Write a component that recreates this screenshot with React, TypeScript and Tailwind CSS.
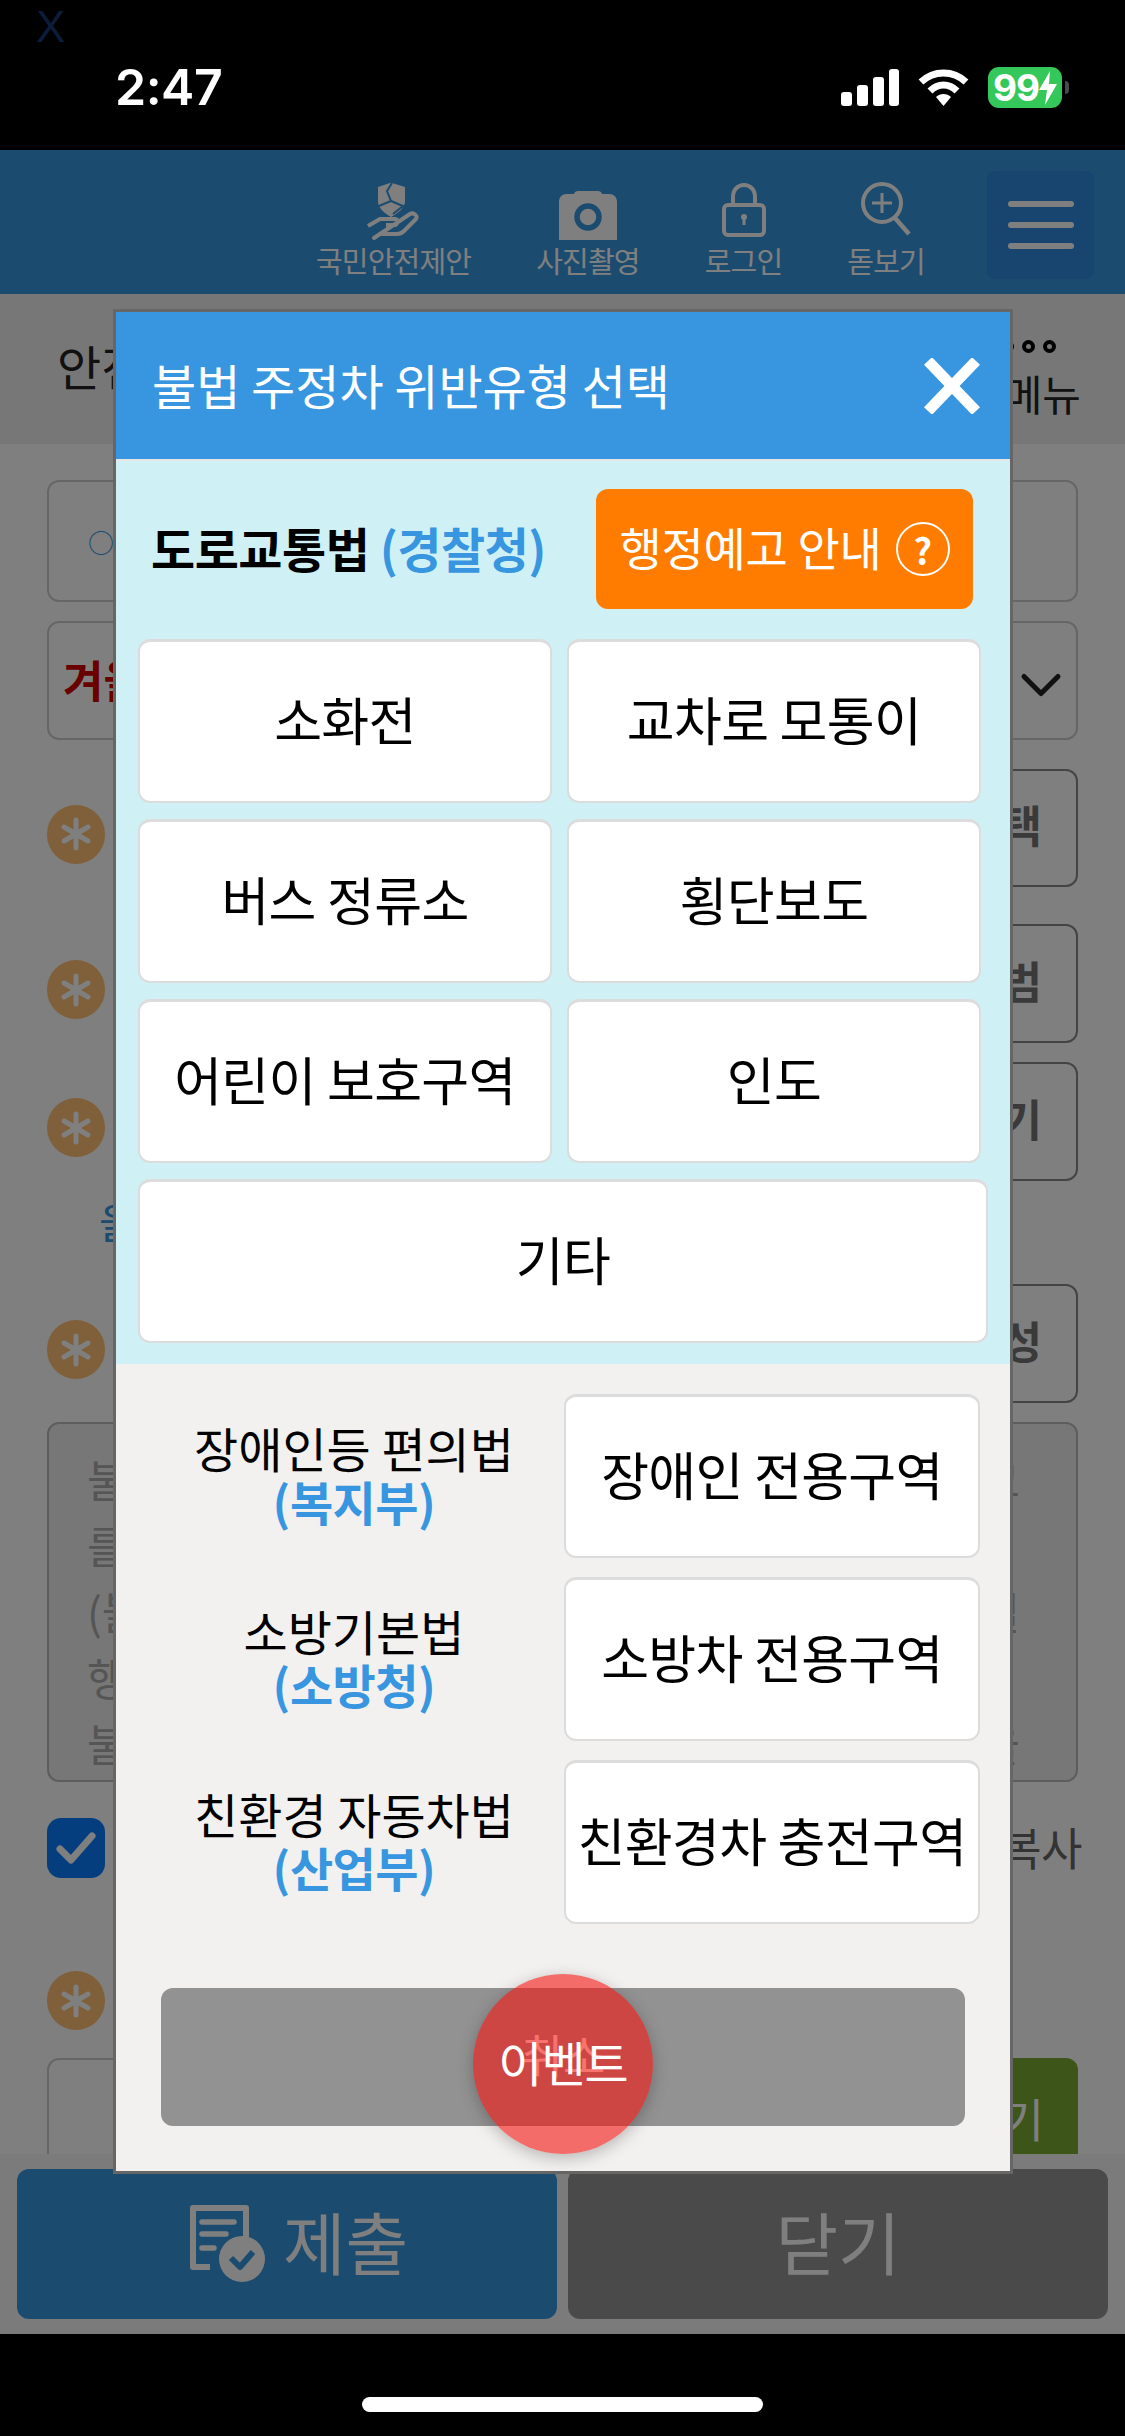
import type { ReactNode } from "react";
import { ChevronDown } from "lucide-react";

const MODAL_ROWS = ["소화전", "교차로 모통이", "버스 정류소", "횡단보도", "어린이 보호구역", "인도"];

const LAW_ROWS = [
  { law: "장애인등 편의법", agency: "(복지부)", zone: "장애인 전용구역" },
  { law: "소방기본법", agency: "(소방청)", zone: "소방차 전용구역" },
  { law: "친환경 자동차법", agency: "(산업부)", zone: "친환경차 충전구역" },
];

const TEXT_LINES = [
  ["불법 주정차", "고"],
  ["를", ""],
  ["(불법", "별"],
  ["행", ""],
  ["불", "을"],
];

const StatusIcons = () => (
  <div className="flex items-center">
    <svg width="58" height="38" viewBox="0 0 58 38" fill="white">
      <rect x="0" y="23" width="11" height="14" rx="3" />
      <rect x="16" y="16" width="11" height="21" rx="3" />
      <rect x="32" y="8" width="11" height="29" rx="3" />
      <rect x="48" y="0" width="10" height="37" rx="3" />
    </svg>
    <svg className="ml-[19px]" width="51" height="38" viewBox="0 0 51 38" fill="none">
      <path d="M3 13 C16 1 35 1 48 13" stroke="white" strokeWidth="7" strokeLinecap="butt" />
      <path d="M12 22 C20 14 31 14 39 22" stroke="white" strokeWidth="7" />
      <path d="M18 28 C22 24 29 24 33 28 L25.500 37 Z" fill="white" />
    </svg>
    <div className="ml-[19px] flex h-[41px] w-[74px] items-center justify-center rounded-[11px] bg-[#34c759] font-['Inter',sans-serif] text-[37px] font-bold leading-none tracking-[-1px] text-white">
      <span>99</span>
      <svg width="18" height="34" viewBox="0 0 18 34" fill="white">
        <path d="M11 0 L0 19 H8 L6 34 L18 13 H10 Z" />
      </svg>
    </div>
    <div className="ml-[3px] h-[13px] w-[4px] rounded-r-full bg-[#4a4a4a]" />
  </div>
);

const ShieldHandIcon = () => (
  <svg className="-translate-x-[2px]" width="54" height="60" viewBox="0 0 54 60" fill="none">
    <path d="M13 6 L25 2 L27 2 L40 6 V20 C40 27 33 32 26 36 C19 32 13 27 13 20 Z" fill="white" />
    <path d="M27 2 L22 10 L26 20 L14 25 M26 20 L38 25 L28 33" stroke="#3896e0" strokeWidth="2" />
    <path
      d="M3 45 L15 38 H30 C33 38 33 43 30 44 H21 M30 43 L45 33 C49 31 53 35 51 38 L39 50 C37 52 35 53 32 53 H15 L9 57 Z"
      stroke="white"
      strokeWidth="4"
      strokeLinejoin="round"
    />
  </svg>
);

const CameraIcon = () => (
  <svg width="58" height="60" viewBox="0 0 58 60" fill="none">
    <path
      d="M0 21 C0 16 3 13 8 13 H15 C16 10 18 10 20 10 H38 C40 10 42 10 43 13 H50 C55 13 58 16 58 21 V59 H0 Z"
      fill="white"
    />
    <circle cx="29" cy="36" r="11" stroke="#3896e0" strokeWidth="5.500" />
  </svg>
);

const LockIcon = () => (
  <svg width="44" height="60" viewBox="0 0 44 60" fill="none">
    <path d="M11 26 V16 C11 0 33 0 33 16 V26" stroke="white" strokeWidth="4" />
    <rect x="2" y="24" width="40" height="30" rx="4" stroke="white" strokeWidth="4" />
    <circle cx="22" cy="36" r="3" fill="white" />
    <rect x="20.500" y="37" width="3" height="7" fill="white" />
  </svg>
);

const MagnifierIcon = () => (
  <svg width="52" height="60" viewBox="0 0 52 60" fill="none">
    <circle cx="22" cy="22" r="19" stroke="white" strokeWidth="4" />
    <path d="M22 12 V32 M12 22 H32" stroke="white" strokeWidth="3" />
    <path d="M35 37 L49 53" stroke="white" strokeWidth="4.500" />
  </svg>
);

const SubmitIcon = () => (
  <svg width="76" height="78" viewBox="0 0 76 78" fill="none">
    <path d="M20 62 H3 V3 H56 V32" stroke="white" strokeWidth="6" strokeLinejoin="round" />
    <path d="M12 17 H44 M12 29 H36 M12 43 H24" stroke="white" strokeWidth="5.500" strokeLinecap="round" />
    <circle cx="52" cy="54" r="23" fill="white" />
    <path d="M41 53 L50 62 L63 47" stroke="#3896e0" strokeWidth="6" strokeLinejoin="round" />
  </svg>
);

const HeaderLink = ({ label, children }: { label: string; children: ReactNode }) => (
  <div className="flex flex-col items-center">
    <div className="flex h-[60px] items-start justify-center">{children}</div>
    <span className="mt-[2px] text-[29px] leading-[34px] tracking-[-0.8px] text-white">{label}</span>
  </div>
);

const RequiredMark = ({ className = "" }: { className?: string }) => (
  <div className={`flex h-[59px] w-[58px] shrink-0 items-center justify-center rounded-full bg-[#ffc074] ${className}`}>
    <svg width="32" height="34" viewBox="0 0 32 34" stroke="white" strokeWidth="5" strokeLinecap="round">
      <path d="M16 3 V31 M4 10 L28 24 M28 10 L4 24" />
    </svg>
  </div>
);

const FormRow = ({ label, height }: { label: string; height: string }) => (
  <div className={`flex items-center justify-between ${height}`}>
    <RequiredMark className="mt-[12px]" />
    <div className="flex h-full w-[400px] items-center justify-end rounded-[12px] border-2 border-[#888] pb-[8px] pr-[34px] text-[44px] font-bold text-[#747474]">
      {label}
    </div>
  </div>
);

const ChoiceButton = ({ label, className = "w-full" }: { label: string; className?: string }) => (
  <button
    type="button"
    className={`flex h-[164px] items-center justify-center rounded-[12px] border-2 border-t-[3px] border-[#dcdcdc] bg-white pb-[6px] text-[52px] tracking-[-0.6px] text-black ${className}`}
  >
    {label}
  </button>
);

export default function App() {
  return (
    <div className="flex h-[2436px] w-[1125px] flex-col overflow-hidden bg-black font-['Noto_Sans_CJK_KR',sans-serif]">
      {/* status bar */}
      <div className="relative flex h-[150px] shrink-0 items-start justify-between pl-[115px] pr-[56px] pt-[67px]">
        <span className="absolute left-[36px] top-[2px] font-['Liberation_Sans',sans-serif] text-[44px] leading-[50px] text-[#0b1d3a]">
          X
        </span>
        <span className="font-['Inter',sans-serif] text-[50px] font-semibold leading-[40px] tracking-[-0.5px] text-white">
          2:47
        </span>
        <StatusIcons />
      </div>

      <div className="relative flex h-[2184px] shrink-0 flex-col overflow-hidden bg-white">
        {/* page behind the dialog */}
        <header className="flex h-[144px] shrink-0 items-start justify-end gap-[65px] bg-[#3896e0] pr-[31px] pt-[31px]">
          <HeaderLink label="국민안전제안">
            <ShieldHandIcon />
          </HeaderLink>
          <HeaderLink label="사진촬영">
            <CameraIcon />
          </HeaderLink>
          <HeaderLink label="로그인">
            <LockIcon />
          </HeaderLink>
          <HeaderLink label="돋보기">
            <MagnifierIcon />
          </HeaderLink>
          <button
            type="button"
            className="-ml-[3px] -mt-[10px] flex h-[108px] w-[107px] flex-col items-center justify-center gap-[15px] rounded-[8px] bg-[#308ade]"
          >
            <span className="h-[6px] w-[66px] rounded-full bg-white" />
            <span className="h-[6px] w-[66px] rounded-full bg-white" />
            <span className="h-[6px] w-[66px] rounded-full bg-white" />
          </button>
        </header>

        <div className="flex h-[150px] shrink-0 items-start justify-between bg-[#eeeeee] pl-[57px] pr-[44px] pt-[36px]">
          <span className="text-[48px] leading-[70px] text-[#222]">안전신문고</span>
          <div className="flex flex-col items-end pt-[10px]">
            <div className="mr-[25px] flex gap-[8px]">
              <span className="h-[13px] w-[13px] rounded-full border-[4px] border-black" />
              <span className="h-[13px] w-[13px] rounded-full border-[4px] border-black" />
              <span className="h-[13px] w-[13px] rounded-full border-[4px] border-black" />
            </div>
            <span className="mt-[15px] text-[42px] leading-[50px] text-[#222]">전체메뉴</span>
          </div>
        </div>

        <main className="flex min-h-0 flex-1 flex-col overflow-hidden px-[47px] pt-[36px]">
          <div className="flex h-[122px] shrink-0 items-center rounded-[12px] border-2 border-[#ccc] pl-[39px] text-[26px] text-[#3896e0]">
            ○
          </div>
          <div className="mt-[19px] flex h-[119px] shrink-0 items-center justify-between rounded-[12px] border-2 border-[#ccc] pl-[14px] pr-[1px]">
            <span className="pb-[4px] text-[44px] font-bold text-[#d00000]">겨울철</span>
            <ChevronDown className="mt-[8px]" size={68} strokeWidth={1.8} color="#222" />
          </div>
          <div className="mt-[29px] shrink-0">
            <FormRow label="선택" height="h-[118px]" />
          </div>
          <div className="mt-[37px] shrink-0">
            <FormRow label="범" height="h-[119px]" />
          </div>
          <div className="mt-[19px] shrink-0">
            <FormRow label="기" height="h-[119px]" />
          </div>
          <div className="h-[103px] shrink-0 pl-[52px] pt-[12px] text-[42px] leading-[56px] text-[#3896e0]">을</div>
          <FormRow label="성" height="h-[119px] shrink-0" />
          <div className="mt-[19px] flex h-[360px] shrink-0 flex-col rounded-[12px] border-2 border-[#bbb] bg-[#eeeeee] px-[38px] pt-[22px] text-[44px] leading-[66px] text-[#aaa]">
            {TEXT_LINES.map(([left, right], index) => (
              <div key={index} className="flex justify-between pr-[18px]">
                <span>{left}</span>
                <span>{right}</span>
              </div>
            ))}
          </div>
          <div className="mt-[36px] flex h-[60px] shrink-0 items-center justify-between">
            <div className="flex h-[60px] w-[58px] items-center justify-center rounded-[14px] bg-[#0a7cff]">
              <svg width="40" height="34" viewBox="0 0 40 34" fill="none">
                <path d="M4 18 L15 29 L36 5" stroke="white" strokeWidth="7" strokeLinecap="round" strokeLinejoin="round" />
              </svg>
            </div>
            <span className="-mr-[4px] pb-[2px] text-[45px] tracking-[-0.5px] text-[#666]">내용복사</span>
          </div>
          <div className="mt-[93px] shrink-0">
            <RequiredMark />
          </div>
          <div className="mt-[28px] flex min-h-0 flex-1 justify-between">
            <div className="h-[120px] w-[400px] rounded-[12px] border-2 border-[#ccc]" />
            <div className="flex h-[120px] w-[400px] items-start justify-end rounded-[12px] bg-[#7aaa30] pr-[34px] pt-[29px] text-[46px] leading-[60px] text-white">
              찾기
            </div>
          </div>
        </main>

        <footer className="flex h-[180px] shrink-0 gap-[11px] bg-[#f6f6f6] px-[17px] py-[15px]">
          <button
            type="button"
            className="flex w-[540px] items-center justify-center gap-[17px] rounded-[12px] bg-[#3896e0] pl-[24px] text-[68px] text-white"
          >
            <SubmitIcon />
            <span className="pb-[6px]">제출</span>
          </button>
          <button
            type="button"
            className="flex w-[540px] items-center justify-center rounded-[12px] bg-[#949494] pb-[6px] text-[68px] text-white"
          >
            닫기
          </button>
        </footer>

        <div className="absolute inset-0 bg-black/50" />

        {/* dialog */}
        <div className="absolute left-[113px] top-[159px] box-content flex w-[894px] flex-col border-[3px] border-[#666]">
          <div className="flex h-[147px] items-center justify-between bg-[#3896e0] pl-[36px] pr-[30px]">
            <h1 className="pb-[4px] text-[48px] font-normal text-white">불법 주정차 위반유형 선택</h1>
            <svg width="56" height="56" viewBox="0 0 56 56" stroke="white" strokeWidth="11">
              <path d="M4 3 L52 53 M52 3 L4 53" />
            </svg>
          </div>

          <div className="flex flex-col border-t-2 border-[#e6e6e6] bg-[#cff1f6] pb-[21px] pl-[22px] pt-[28px]">
            <div className="flex h-[120px] items-center justify-between pl-[13px] pr-[37px]">
              <p className="pb-[4px] text-[48px] font-bold tracking-[-0.5px] text-black">
                도로교통법 <span className="text-[#3896e0]">(경찰청)</span>
              </p>
              <button
                type="button"
                className="flex h-full w-[377px] items-center justify-center gap-[14px] rounded-[12px] bg-[#ff7c00] text-[46px] tracking-[-0.3px] text-white"
              >
                <span className="pb-[6px]">행정예고 안내</span>
                <span className="flex h-[54px] w-[54px] items-center justify-center rounded-full border-2 border-white text-[36px] font-bold leading-none">
                  ?
                </span>
              </button>
            </div>
            <div className="mt-[30px] grid grid-cols-[414px_414px] gap-x-[15px] gap-y-[16px]">
              {MODAL_ROWS.map((label) => (
                <ChoiceButton key={label} label={label} />
              ))}
              <ChoiceButton label="기타" className="col-span-2 w-[850px]" />
            </div>
          </div>

          <div className="flex h-[807px] flex-col bg-[#f2f1ef] pt-[30px]">
            <div className="flex flex-col gap-[19px]">
              {LAW_ROWS.map((row) => (
                <div key={row.zone} className="flex items-center pl-[44px]">
                  <div className="flex w-[388px] flex-col items-center pb-[4px] text-[48px] leading-[54px] text-black">
                    <span>{row.law}</span>
                    <span className="text-[47px] font-bold tracking-[-0.5px] text-[#3896e0]">{row.agency}</span>
                  </div>
                  <ChoiceButton label={row.zone} className="ml-[16px] w-[416px]" />
                </div>
              ))}
            </div>
            <button
              type="button"
              className="ml-[45px] mt-[64px] flex h-[138px] w-[804px] items-center justify-center rounded-[12px] bg-[#929292] pb-[8px] text-[46px] text-white"
            >
              취소
            </button>
          </div>
        </div>

        {/* floating event badge */}
        <button
          type="button"
          className="absolute left-[473px] top-[1824px] flex h-[180px] w-[180px] items-center justify-center rounded-full bg-[#f5140f]/60 pb-[6px] text-[48px] tracking-[-1px] text-white shadow-[0_4px_16px_rgba(0,0,0,0.25)]"
        >
          이벤트
        </button>
      </div>

      {/* home indicator */}
      <div className="flex flex-1 justify-center pt-[63px]">
        <div className="h-[15px] w-[401px] rounded-full bg-white" />
      </div>
    </div>
  );
}
